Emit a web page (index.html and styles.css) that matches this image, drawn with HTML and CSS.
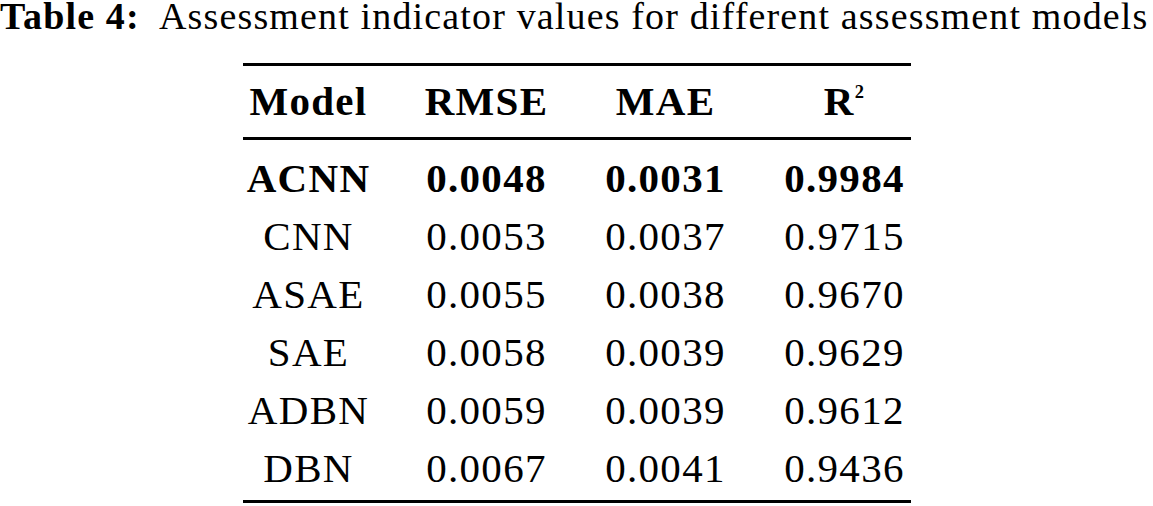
FILE: index.html
```html
<!DOCTYPE html>
<html lang="en">
<head>
<meta charset="utf-8">
<title>Table 4</title>
<link rel="stylesheet" href="styles.css">
</head>
<body>
<div class="caption"><b class="label">Table 4:</b>&nbsp; Assessment indicator values for different assessment models</div>
<div class="table">
  <div class="row head">
    <div class="cell">Model</div>
    <div class="cell">RMSE</div>
    <div class="cell">MAE</div>
    <div class="cell">R<sup class="sup">2</sup></div>
  </div>
  <div class="body">
    <div class="row best">
      <div class="cell">ACNN</div>
      <div class="cell">0.0048</div>
      <div class="cell">0.0031</div>
      <div class="cell">0.9984</div>
    </div>
    <div class="row">
      <div class="cell">CNN</div>
      <div class="cell">0.0053</div>
      <div class="cell">0.0037</div>
      <div class="cell">0.9715</div>
    </div>
    <div class="row">
      <div class="cell">ASAE</div>
      <div class="cell">0.0055</div>
      <div class="cell">0.0038</div>
      <div class="cell">0.9670</div>
    </div>
    <div class="row">
      <div class="cell">SAE</div>
      <div class="cell">0.0058</div>
      <div class="cell">0.0039</div>
      <div class="cell">0.9629</div>
    </div>
    <div class="row">
      <div class="cell">ADBN</div>
      <div class="cell">0.0059</div>
      <div class="cell">0.0039</div>
      <div class="cell">0.9612</div>
    </div>
    <div class="row">
      <div class="cell">DBN</div>
      <div class="cell">0.0067</div>
      <div class="cell">0.0041</div>
      <div class="cell">0.9436</div>
    </div>
  </div>
</div>
</body>
</html>
```
FILE: styles.css
```css
html, body {
  margin: 0;
  padding: 0;
  background: #ffffff;
}

body {
  font-family: "Liberation Serif", "Times New Roman", serif;
  color: #000000;
  width: 1153px;
  height: 506px;
  overflow: hidden;
}

.caption {
  font-size: 38px;
  letter-spacing: 1.15px;
  line-height: 32px;
  height: 32px;
  white-space: nowrap;
  padding-left: 0;
}

.label {
  font-weight: 700;
}

.table {
  margin-top: 31px;
  margin-left: 243px;
  width: 668px;
  border-top: 3px solid #000;
  border-bottom: 3px solid #000;
  font-size: 41px;
  letter-spacing: 1.3px;
}

.row {
  display: grid;
  grid-template-columns: 130px repeat(3, 132px);
  column-gap: 47px;
  height: 58px;
  line-height: 58px;
}

.cell {
  text-align: center;
  white-space: nowrap;
  padding-left: 1px;
}

.head {
  font-weight: 700;
  height: 71px;
  line-height: 71px;
  border-bottom: 3px solid #000;
}

.sup {
  font-size: 0.45em;
  line-height: 0;
  vertical-align: 0.9em;
}

.body {
  padding-top: 9px;
  padding-bottom: 3px;
}

.best {
  font-weight: 700;
}
```
